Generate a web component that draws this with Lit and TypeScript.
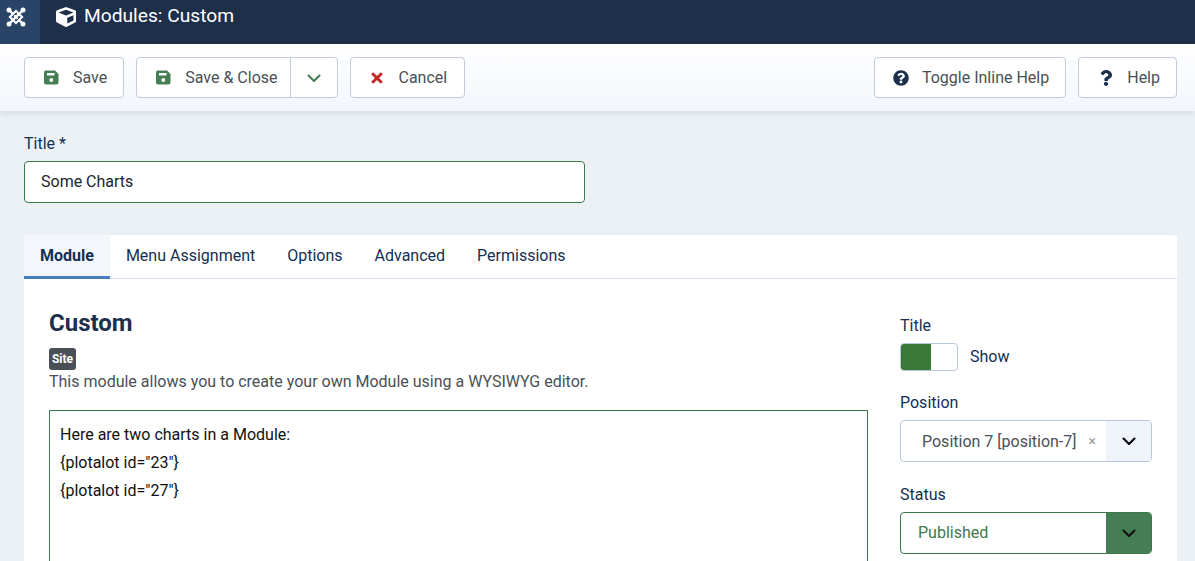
import { LitElement, html, css, svg } from "lit";
import { customElement } from "lit/decorators.js";

const disk = (c: string) => html`<svg class="ico" viewBox="0 0 15 15" width="15" height="15" fill="${c}"><path fill-rule="evenodd" d="M2 .5h9L14.500 4v8.500a2 2 0 0 1-2 2H2a2 2 0 0 1-2-2v-10a2 2 0 0 1 2-2zM3 3v2.500h7.500V3zM7.300 8a2 2 0 1 0 0 4 2 2 0 0 0 0-4z"/></svg>`;
const chev = (c: string, w = 16) => html`<svg viewBox="0 0 16 16" width="${w}" height="${w}" fill="none" stroke="${c}" stroke-width="2.100" stroke-linecap="round" stroke-linejoin="round"><path d="M2.500 5.500 8 11l5.500-5.500"/></svg>`;

@customElement("app-root")
export class AppRoot extends LitElement {
  static styles = css`
    :host { display: block; width: 1195px; height: 561px; overflow: hidden; background: #ecf1f6; font-family: Roboto, "Liberation Sans", sans-serif; font-size: 16px; color: #132f53; }
    * { box-sizing: border-box; }
    .top { height: 44px; background: #1e2f49; display: flex; color: #fff; }
    .brand { width: 40px; height: 44px; background: #2a4467; padding: 6px 0 0 5px; }
    .brand svg { display: block; }
    .ttl { display: flex; align-items: flex-start; gap: 8px; padding: 5px 0 0 16px; font-size: 19.200px; line-height: 22px; }
    .ttl svg { margin-top: 2px; }
    .bar { height: 67px; padding: 13px 18px 0 24px; display: flex; gap: 12px; background: linear-gradient(#fff, #f2f6fb); box-shadow: 0 2px 6px rgba(60, 80, 120, .14); position: relative; }
    .sp { flex: 1; }
    .btn { height: 41px; background: #fff; border: 1px solid #c3cbd8; border-radius: 4px; display: flex; align-items: center; color: #495057; font-size: 16px; white-space: nowrap; }
    .main { display: flex; align-items: center; gap: 14px; padding: 0 16px 0 19px; height: 100%; }
    .main.sc { padding-right: 12px; }
    .main.cancel { gap: 16px; padding-left: 20px; padding-right: 17px; }
    .main.toggle { gap: 13px; padding-left: 18px; }
    .main.help { gap: 15px; padding-left: 21px; }
    .ico { flex: none; }
    .split { width: 47px; height: 100%; border-left: 1px solid #c3cbd8; display: flex; align-items: center; justify-content: center; }
    .body { padding: 23px 18px 0 24px; }
    .lbl { line-height: 20px; font-size: 16px; color: #132f53; }
    .input { width: 561px; height: 42px; margin-top: 7px; border: 1px solid #3d7a4a; border-radius: 4px; background: #fff; color: #22262a; display: flex; align-items: center; padding: 0 0 2px 16px; }
    .card { margin-top: 32px; background: #fff; border-radius: 4px 4px 0 0; height: 400px; }
    .tabs { display: flex; height: 44px; border-bottom: 1px solid #d8e2ee; }
    .tab { padding: 0 16px; line-height: 41px; height: 43px; color: #132f53; }
    .tab.on { font-weight: 700; background: #f3f6fa; border-bottom: 3px solid #4a7cc2; height: 44px; }
    .content { display: flex; padding: 0 25px; }
    .left { width: 819px; padding-top: 29px; }
    h2 { margin: 0; font-size: 24px; line-height: 30px; font-weight: 700; color: #1c2f4c; }
    .badge { display: block; width: 27px; height: 22px; margin-top: 10px; background: #495057; border-radius: 3px; color: #fff; font-size: 12px; font-weight: 700; line-height: 22px; text-align: center; }
    .desc { color: #495057; line-height: 22px; margin-top: 1px; }
    .editor { margin-top: 17px; border: 1px solid #3d7a4a; height: 200px; padding: 10px; color: #111; font-size: 16px; }
    .editor div { line-height: 28px; }
    .right { width: 252px; margin-left: 32px; padding-top: 37px; }
    .sw-row { display: flex; align-items: center; gap: 12px; margin-top: 7px; color: #132f53; }
    .sw-row > span:last-child { padding-bottom: 2px; }
    .sw { width: 58px; height: 28px; border: 1px solid #b8c8de; border-radius: 4px; overflow: hidden; display: block; background: #fff; }
    .sw i { display: block; width: 30px; height: 100%; background: #387a35; }
    .sel { height: 42px; margin-top: 7px; border: 1px solid #b8c8de; border-radius: 4px; display: flex; overflow: hidden; background: #fff; }
    .sel .val { flex: 1; display: flex; align-items: center; padding-left: 21px; color: #495057; white-space: nowrap; }
    .x { color: #9a9a9a; font-size: 14px; margin-left: 12px; }
    .sel .arr { width: 45px; display: flex; align-items: center; justify-content: center; background: #eff3fa; }
    .sel.ok { border-color: #3d7a4a; }
    .sel.ok .val { color: #3d7a4a; padding: 0 0 2px 17px; }
    .sel.ok .arr { background: #457d54; }
    .gap1 { margin-top: 22px; }
    .gap2 { margin-top: 23px; }
  `;

  render() {
    return html`
      <div class="top">
        <div class="brand">
          <svg width="22" height="22" viewBox="0 0 22 22" fill="none" stroke="#fff" stroke-linecap="round">
            ${svg`<path stroke-width="2.200" d="M11 5 17 11 11 17 5 11z"/>
            <path stroke-width="2.400" d="M4 4 18 18M18 4 4 18"/>
            <path stroke="#2a4467" stroke-width="1" d="M7 11 11 7M11 15l4-4"/>
            <circle cx="4" cy="4" r="2.500" fill="#fff" stroke="none"/><circle cx="18" cy="4" r="2.500" fill="#fff" stroke="none"/><circle cx="4" cy="18" r="2.500" fill="#fff" stroke="none"/><circle cx="18" cy="18" r="2.500" fill="#fff" stroke="none"/>`}
          </svg>
        </div>
        <div class="ttl">
          <svg width="20" height="20" viewBox="0 0 512 512" fill="#fff"><path d="M239.100 6.300 29.100 84.900A48 48 0 0 0 0 129.900v226.600c0 18.200 10.300 34.800 26.500 42.900l210 105c13.500 6.800 29.400 6.800 42.900 0l210-105c16.300-8.100 26.500-24.800 26.500-42.900V130c0-20-12.400-37.900-31.100-44.900l-210-78.700c-10.800-4.100-22.800-4.100-33.700-.1zM256 68.400l192 72v1.100l-192 78-192-78v-1.100l192-72zm32 356V275.500l160-65v133.900l-160 80z"/></svg>
          <span>Modules: Custom</span>
        </div>
      </div>
      <div class="bar">
        <div class="btn"><div class="main">${disk("#457d54")}<span>Save</span></div></div>
        <div class="btn"><div class="main sc">${disk("#457d54")}<span>Save &amp; Close</span></div><div class="split">${chev("#457d54")}</div></div>
        <div class="btn"><div class="main cancel">
          <svg class="ico" width="12" height="12" viewBox="0 0 12 12" stroke="#c62828" stroke-width="3" fill="none"><path d="M1.200 1.200l9.600 9.600M10.800 1.200l-9.600 9.600"/></svg>
          <span>Cancel</span></div></div>
        <div class="sp"></div>
        <div class="btn"><div class="main toggle">
          <svg class="ico" width="16" height="16" viewBox="0 0 512 512" fill="#1c2f4c"><path d="M504 256c0 137-111 248-248 248S8 393 8 256 119 8 256 8s248 111 248 248zM262.700 90c-54.500 0-89.300 23-116.500 63.800-3.500 5.300-2.400 12.400 2.700 16.300l34.700 26.300c5.200 3.900 12.600 3 16.700-2.100 17.900-22.700 30.100-35.800 57.300-35.800 20.400 0 45.700 13.100 45.700 33 0 15-12.400 22.700-32.600 34C247.100 238.500 216 254.900 216 296v4c0 6.600 5.400 12 12 12h56c6.600 0 12-5.400 12-12v-1.300c0-28.500 83.200-29.600 83.200-106.700 0-58-60.200-102-116.500-102zM256 338c-25.400 0-46 20.600-46 46 0 25.400 20.600 46 46 46s46-20.600 46-46c0-25.400-20.600-46-46-46z"/></svg>
          <span>Toggle Inline Help</span></div></div>
        <div class="btn"><div class="main help">
          <svg class="ico" width="12" height="16" viewBox="0 0 384 512" fill="#1c2f4c"><path d="M202 0C122 0 70 33 29 94c-8 11-5 27 6 35l44 33c11 8 26 6 35-5 26-32 45-51 85-51 31 0 70 20 70 50 0 23-19 34-49 51-36 20-83 45-83 107v10c0 13 11 24 24 24h74c13 0 24-11 24-24v-6c0-43 125-45 125-161C384 69 293 0 202 0zM192 374c-38 0-69 31-69 69s31 69 69 69 69-31 69-69-31-69-69-69z"/></svg>
          <span>Help</span></div></div>
      </div>
      <div class="body">
        <div class="lbl">Title *</div>
        <div class="input">Some Charts</div>
        <div class="card">
          <div class="tabs">
            <div class="tab on">Module</div>
            <div class="tab">Menu Assignment</div>
            <div class="tab">Options</div>
            <div class="tab">Advanced</div>
            <div class="tab">Permissions</div>
          </div>
          <div class="content">
            <div class="left">
              <h2>Custom</h2>
              <span class="badge">Site</span>
              <div class="desc">This module allows you to create your own Module using a WYSIWYG editor.</div>
              <div class="editor">
                <div>Here are two charts in a Module:</div>
                <div>{plotalot id="23"}</div>
                <div>{plotalot id="27"}</div>
              </div>
            </div>
            <div class="right">
              <div class="lbl">Title</div>
              <div class="sw-row"><span class="sw"><i></i></span><span>Show</span></div>
              <div class="lbl gap1">Position</div>
              <div class="sel"><div class="val">Position 7 [position-7]<span class="x">×</span></div><div class="arr">${chev("#000")}</div></div>
              <div class="lbl gap2">Status</div>
              <div class="sel ok"><div class="val">Published</div><div class="arr">${chev("#111")}</div></div>
            </div>
          </div>
        </div>
      </div>
    `;
  }
}
